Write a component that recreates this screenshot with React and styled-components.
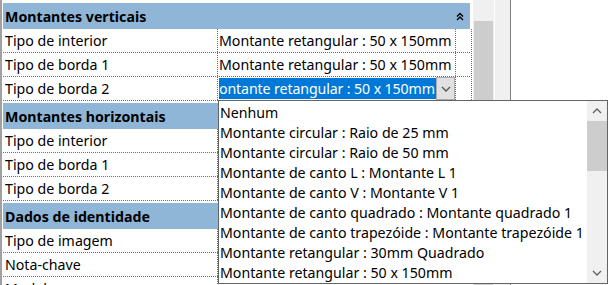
import React from "react";
import styled, { createGlobalStyle } from "styled-components";

const GlobalStyle = createGlobalStyle`
  html, body {
    margin: 0;
    padding: 0;
    background: #ffffff;
    overflow: hidden;
  }
  body {
    font-family: "Noto Sans", "Open Sans", sans-serif;
    font-size: 14.2px;
    color: #000000;
  }
`;

const Screen = styled.div`
  position: relative;
  width: 609px;
  height: 285px;
  overflow: hidden;
  display: flex;
  align-items: flex-start;
`;

const Grid = styled.div`
  width: 470px;
  height: 285px;
  border-left: 2px solid #a0a0a0;
  padding-top: 3px;
  box-sizing: border-box;
  display: flex;
  flex-direction: column;
  gap: 2px;
`;

const Group = styled.div`
  display: flex;
  flex-direction: column;
`;

const GroupHeader = styled.div`
  height: 26px;
  margin-left: 1px;
  background: #8fb5d7;
  display: flex;
  align-items: center;
  justify-content: space-between;
  padding: 0 6px 0 2px;
  font-weight: 700;
  box-sizing: border-box;
`;

const Row = styled.div`
  height: 24px;
  margin-left: 1px;
  display: grid;
  grid-template-columns: 215px 238px 16px;
  border-bottom: 1px dotted #6e6e6e;
  box-sizing: border-box;
`;

const NameCell = styled.div`
  padding-left: 2px;
  line-height: 23px;
  border-right: 1px dotted #6e6e6e;
  white-space: nowrap;
  overflow: hidden;
`;

const ValueCell = styled.div`
  display: flex;
  align-items: stretch;
  padding-left: 1px;
  border-right: 1px dotted #6e6e6e;
  white-space: nowrap;
  overflow: hidden;
  line-height: 23px;
`;

const EditText = styled.div`
  flex: 1;
  background: ${(p) => (p.$selected ? "#0078d7" : "transparent")};
  color: ${(p) => (p.$selected ? "#ffffff" : "#000000")};
  margin: ${(p) => (p.$selected ? "1px 0 1px 0" : "0")};
  line-height: ${(p) => (p.$selected ? "21px" : "23px")};
  letter-spacing: ${(p) => (p.$selected ? "-0.12px" : "0")};
  overflow: hidden;
`;

const DropButton = styled.div`
  width: 19px;
  flex-shrink: 0;
  background: #e1e1e1;
  border: 1px solid #adadad;
  box-sizing: border-box;
  display: flex;
  align-items: center;
  justify-content: center;
`;

const EmptyCell = styled.div`
  border-right: 1px dotted #6e6e6e;
`;

const VScroll = styled.div`
  width: 21px;
  height: 285px;
  margin-left: 3px;
  background: #f0f0f0;
  display: flex;
  flex-direction: column;
`;

const ScrollTop = styled.div`
  height: 21px;
`;

const ScrollThumb = styled.div`
  height: ${(p) => p.$h}px;
  margin: 0 1px;
  background: #cdcdcd;
`;

const SidePanel = styled.div`
  width: 15px;
  height: 285px;
  margin-left: 1px;
  background: #f0f0f0;
  border-right: 1px solid #808080;
`;

const ListBox = styled.div`
  position: absolute;
  left: 218px;
  top: 100px;
  width: 390px;
  height: 184px;
  background: #ffffff;
  border: 1px solid #646464;
  box-sizing: border-box;
  display: flex;
`;

const Items = styled.div`
  flex: 1;
  padding-top: 2px;
  overflow: hidden;
`;

const Item = styled.div`
  height: 20px;
  line-height: 20px;
  padding-left: 1px;
  white-space: nowrap;
`;

const ListScroll = styled.div`
  width: 20px;
  background: #f0f0f0;
  display: flex;
  flex-direction: column;
`;

const Arrow = styled.div`
  height: 20px;
  display: flex;
  align-items: center;
  justify-content: center;
`;

const ListThumb = styled.div`
  height: 50px;
  background: #cdcdcd;
`;

const Spacer = styled.div`
  flex: 1;
`;

const DoubleUp = () => (
  <svg width="8" height="9" viewBox="0 0 8 9">
    <path d="M1 4.5 L4 1.5 L7 4.5 M1 8 L4 5 L7 8" fill="none" stroke="#000" strokeWidth="1.4" />
  </svg>
);

const Chevron = ({ up, color = "#606060" }) => (
  <svg width="10" height="6" viewBox="0 0 10 6">
    <path
      d={up ? "M1 5 L5 1 L9 5" : "M1 1 L5 5 L9 1"}
      fill="none"
      stroke={color}
      strokeWidth="1.3"
    />
  </svg>
);

const groups = [
  {
    title: "Montantes verticais",
    collapse: true,
    rows: [
      { name: "Tipo de interior", value: "Montante retangular : 50 x 150mm" },
      { name: "Tipo de borda 1", value: "Montante retangular : 50 x 150mm" },
      { name: "Tipo de borda 2", value: "ontante retangular : 50 x 150mm", selected: true },
    ],
  },
  {
    title: "Montantes horizontais",
    rows: [
      { name: "Tipo de interior", value: "" },
      { name: "Tipo de borda 1", value: "" },
      { name: "Tipo de borda 2", value: "" },
    ],
  },
  {
    title: "Dados de identidade",
    rows: [
      { name: "Tipo de imagem", value: "" },
      { name: "Nota-chave", value: "" },
      { name: "Modelo", value: "" },
    ],
  },
];

const options = [
  "Nenhum",
  "Montante circular : Raio de 25 mm",
  "Montante circular : Raio de 50 mm",
  "Montante de canto L : Montante L 1",
  "Montante de canto V : Montante V 1",
  "Montante de canto quadrado : Montante quadrado 1",
  "Montante de canto trapezóide : Montante trapezóide 1",
  "Montante retangular : 30mm Quadrado",
  "Montante retangular : 50 x 150mm",
];

export default function App() {
  return (
    <>
      <GlobalStyle />
      <Screen>
        <Grid>
          {groups.map((g) => (
            <Group key={g.title}>
              <GroupHeader>
                <span>{g.title}</span>
                {g.collapse && <DoubleUp />}
              </GroupHeader>
              {g.rows.map((r) => (
                <Row key={r.name}>
                  <NameCell>{r.name}</NameCell>
                  <ValueCell>
                    <EditText $selected={r.selected}>{r.value}</EditText>
                    {r.selected && (
                      <DropButton>
                        <Chevron color="#555" />
                      </DropButton>
                    )}
                  </ValueCell>
                  <EmptyCell />
                </Row>
              ))}
            </Group>
          ))}
        </Grid>
        <VScroll>
          <ScrollTop />
          <ScrollThumb $h={264} />
        </VScroll>
        <SidePanel />

        <ListBox>
          <Items>
            {options.map((o) => (
              <Item key={o}>{o}</Item>
            ))}
          </Items>
          <ListScroll>
            <Arrow>
              <Chevron up />
            </Arrow>
            <ListThumb />
            <Spacer />
            <Arrow>
              <Chevron />
            </Arrow>
          </ListScroll>
        </ListBox>
      </Screen>
    </>
  );
}
